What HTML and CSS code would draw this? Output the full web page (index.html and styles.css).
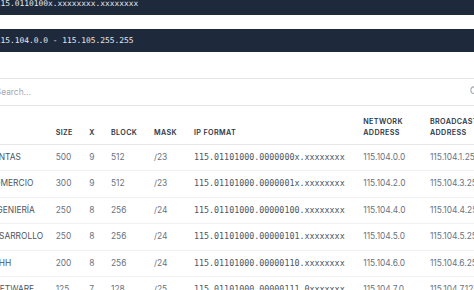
FILE: index.html
```html
<!DOCTYPE html>
<html lang="es">
<head>
<meta charset="utf-8">
<title>Subnetting</title>
<link rel="stylesheet" href="styles.css">
</head>
<body>
<div class="page">
  <div class="bar"><code>115.0110100x.xxxxxxxx.xxxxxxxx</code></div>
  <div class="bar bar-second"><code>115.104.0.0 - 115.105.255.255</code></div>

  <div class="search">
    <input class="search-input" type="text" placeholder="Search...">
    <svg class="search-icon" width="10" height="10" viewBox="0 0 10 10" aria-hidden="true">
      <circle cx="4.2" cy="4.2" r="3.3" fill="none" stroke="#a3a8b0" stroke-width="1.1"/>
      <path d="M6.7 6.7 L9.2 9.2" stroke="#a3a8b0" stroke-width="1.1" stroke-linecap="round"/>
    </svg>
  </div>

  <table class="subnets">
    <colgroup>
      <col class="c-name"><col class="c-size"><col class="c-x"><col class="c-block">
      <col class="c-mask"><col class="c-ip"><col class="c-net"><col class="c-bc">
    </colgroup>
    <thead>
      <tr>
        <th></th><th>Size</th><th>X</th><th>Block</th><th>Mask</th>
        <th>IP Format</th><th>Network Address</th><th>Broadcast Address</th>
      </tr>
    </thead>
    <tbody>
      <tr><td class="name">VENTAS</td><td>500</td><td>9</td><td>512</td><td>/23</td><td class="mono">115.01101000.0000000x.xxxxxxxx</td><td>115.104.0.0</td><td>115.104.1.255</td></tr>
      <tr><td class="name">COMERCIO</td><td>300</td><td>9</td><td>512</td><td>/23</td><td class="mono">115.01101000.0000001x.xxxxxxxx</td><td>115.104.2.0</td><td>115.104.3.255</td></tr>
      <tr><td class="name">INGENIERÍA</td><td>250</td><td>8</td><td>256</td><td>/24</td><td class="mono">115.01101000.00000100.xxxxxxxx</td><td>115.104.4.0</td><td>115.104.4.255</td></tr>
      <tr><td class="name">DESARROLLO</td><td>250</td><td>8</td><td>256</td><td>/24</td><td class="mono">115.01101000.00000101.xxxxxxxx</td><td>115.104.5.0</td><td>115.104.5.255</td></tr>
      <tr><td class="name">RRHH</td><td>200</td><td>8</td><td>256</td><td>/24</td><td class="mono">115.01101000.00000110.xxxxxxxx</td><td>115.104.6.0</td><td>115.104.6.255</td></tr>
      <tr><td class="name">SOFTWARE</td><td>125</td><td>7</td><td>128</td><td>/25</td><td class="mono">115.01101000.00000111.0xxxxxxx</td><td>115.104.7.0</td><td>115.104.7.127</td></tr>
    </tbody>
  </table>
</div>
</body>
</html>
```
FILE: styles.css
```css
html, body {
  margin: 0;
  padding: 0;
  overflow: hidden;
  background: #ffffff;
}

body {
  font-family: Inter, "Noto Sans", "Liberation Sans", sans-serif;
  color: #374151;
}

.page {
  width: 580px;
  margin: -8.4px 0 0 -20px;
  display: flex;
  flex-direction: column;
}

.bar {
  height: 23.4px;
  display: flex;
  align-items: center;
  padding: 0 15.7px;
  background: #1e293b;
  color: #e5e9f0;
  box-sizing: border-box;
}

.bar code {
  font-family: "DejaVu Sans Mono", "Liberation Mono", monospace;
  font-size: 7.9px;
  white-space: pre;
}

.bar-second {
  margin-top: 14px;
}

.search {
  position: relative;
  margin-top: 25.6px;
}

.search-input {
  display: block;
  width: 100%;
  height: 27.7px;
  box-sizing: border-box;
  margin: 0;
  padding: 0 0 0 15.8px;
  border: 1px solid #e3e5e8;
  border-left: none;
  border-right: none;
  font-family: Inter, "Noto Sans", sans-serif;
  font-size: 8.4px;
  color: #374151;
  background: #ffffff;
  outline: none;
}

.search-input::placeholder {
  color: #a3a8b0;
}

.search-icon {
  position: absolute;
  left: 490px;
  top: 8.4px;
}

.subnets {
  table-layout: fixed;
  width: 532px;
  border-collapse: collapse;
  margin-top: 2.1px;
}

.c-name { width: 67.7px; }
.c-size { width: 33.6px; }
.c-x { width: 21.7px; }
.c-block { width: 43px; }
.c-mask { width: 40px; }
.c-ip { width: 169.3px; }
.c-net { width: 66.7px; }
.c-bc { width: 90px; }

.subnets th {
  text-align: left;
  vertical-align: bottom;
  padding: 8px 8px 6.2px 8px;
  font-size: 7.2px;
  line-height: 11px;
  letter-spacing: 0.36px;
  font-weight: 600;
  text-transform: uppercase;
  color: #2d3748;
  border-bottom: 1px solid #e5e7eb;
}

.subnets td {
  padding: 0 8px;
  line-height: 25.5px;
  font-size: 8.4px;
  color: #6b7280;
  white-space: nowrap;
  border-bottom: 1px solid #f0f1f3;
}

.subnets td.name {
  color: #4b5563;
}

.subnets td.mono {
  font-family: "DejaVu Sans Mono", "Liberation Mono", monospace;
  font-size: 8.35px;
  color: #4b5563;
}
```
